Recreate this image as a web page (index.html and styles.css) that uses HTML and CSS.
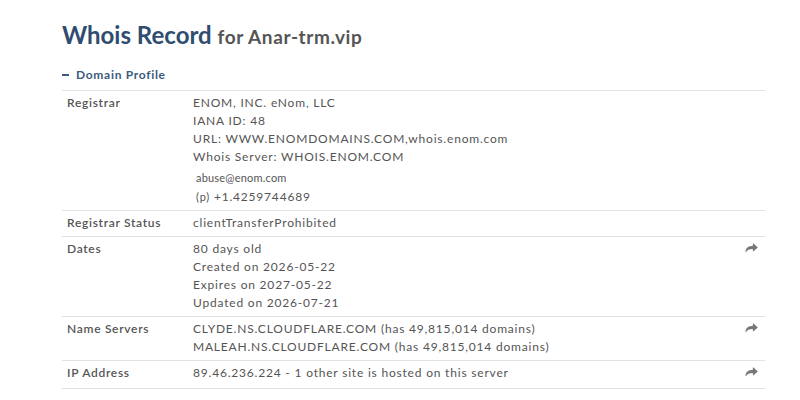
FILE: index.html
```html
<!DOCTYPE html>
<html>
<head>
<meta charset="utf-8">
<link rel="stylesheet" href="styles.css">
</head>
<body>
<div class="page">
  <h1 class="title">Whois Record <small>for Anar-trm.vip</small></h1>
  <div class="section-head"><span class="dash"></span>Domain Profile</div>
  <div class="table">
    <div class="row">
      <div class="label">Registrar</div>
      <div class="value">
        <div>ENOM, INC. eNom, LLC</div>
        <div>IANA ID: 48</div>
        <div>URL: WWW.ENOMDOMAINS.COM,whois.enom.com</div>
        <div>Whois Server: WHOIS.ENOM.COM</div>
        <div class="contact">
          <div class="email">abuse@enom.com</div>
          <div class="phone"><span class="p">(p)</span> +1.4259744689</div>
        </div>
      </div>
      <div class="action"></div>
    </div>
    <div class="row">
      <div class="label">Registrar Status</div>
      <div class="value">clientTransferProhibited</div>
      <div class="action"></div>
    </div>
    <div class="row">
      <div class="label">Dates</div>
      <div class="value">
        <div>80 days old</div>
        <div>Created on 2026-05-22</div>
        <div>Expires on 2027-05-22</div>
        <div>Updated on 2026-07-21</div>
      </div>
      <div class="action"><svg class="share" viewBox="0 0 14 12"><path d="M13.6 4.6 9.2 0.6c-.3-.3-.7-.1-.7.3v2.1C4.1 3.2 1 4.9.4 9.6c0 .4.5.6.7.2C2.3 7.6 4.6 6.7 8.5 6.6v2.2c0 .4.4.6.7.3l4.4-4c.2-.2.2-.4 0-.5z"/></svg></div>
    </div>
    <div class="row">
      <div class="label">Name Servers</div>
      <div class="value">
        <div>CLYDE.NS.CLOUDFLARE.COM (has 49,815,014 domains)</div>
        <div>MALEAH.NS.CLOUDFLARE.COM (has 49,815,014 domains)</div>
      </div>
      <div class="action"><svg class="share" viewBox="0 0 14 12"><path d="M13.6 4.6 9.2 0.6c-.3-.3-.7-.1-.7.3v2.1C4.1 3.2 1 4.9.4 9.6c0 .4.5.6.7.2C2.3 7.6 4.6 6.7 8.5 6.6v2.2c0 .4.4.6.7.3l4.4-4c.2-.2.2-.4 0-.5z"/></svg></div>
    </div>
    <div class="row last">
      <div class="label">IP Address</div>
      <div class="value">89.46.236.224 - 1 other site is hosted on this server</div>
      <div class="action"><svg class="share" viewBox="0 0 14 12"><path d="M13.6 4.6 9.2 0.6c-.3-.3-.7-.1-.7.3v2.1C4.1 3.2 1 4.9.4 9.6c0 .4.5.6.7.2C2.3 7.6 4.6 6.7 8.5 6.6v2.2c0 .4.4.6.7.3l4.4-4c.2-.2.2-.4 0-.5z"/></svg></div>
    </div>
  </div>
</div>
</body>
</html>
```
FILE: styles.css
```css
* { box-sizing: border-box; }
body {
  margin: 0;
  background: #fff;
  font-family: Lato, "Open Sans", sans-serif;
  color: #555;
}
.page {
  padding: 20px 35px 0 62px;
}
.title {
  margin: 0;
  font-size: 24px;
  font-weight: 700;
  color: #2f4d70;
  line-height: 30px;
}
.title small {
  font-size: 19px;
  color: #555;
  font-weight: 700;
  letter-spacing: 0.6px;
}
.section-head {
  margin-top: 15px;
  font-size: 12px;
  font-weight: 700;
  color: #3b5b80;
  line-height: 16px;
  display: flex;
  align-items: center;
  letter-spacing: 0.7px;
}
.dash {
  display: inline-block;
  width: 7px;
  height: 2px;
  background: #3b5b80;
  margin-right: 7px;
}
.table {
  margin-top: 7px;
  border-top: 1px solid #e3e3e3;
}
.row {
  display: flex;
  border-bottom: 1px solid #e3e3e3;
  padding: 3px 0 4px 5px;
  font-size: 12px;
  line-height: 18px;
}
.row.last {
  padding-bottom: 6px;
}
.label {
  width: 126px;
  flex: none;
  font-weight: 600;
  color: #555;
  letter-spacing: 0.7px;
}
.value {
  flex: 1;
  color: #555;
  letter-spacing: 0.8px;
  font-variant-numeric: tabular-nums;
}
.contact {
  margin-top: 2px;
  padding-left: 3px;
}
.email {
  font-size: 11px;
  line-height: 19px;
  letter-spacing: 0.2px;
}
.phone {
  line-height: 19px;
}
.p { font-size: 11px; }
.action {
  width: 20px;
  flex: none;
  padding-top: 3px;
}
.share {
  width: 13px;
  height: 11px;
  fill: #777;
  display: block;
}
```
